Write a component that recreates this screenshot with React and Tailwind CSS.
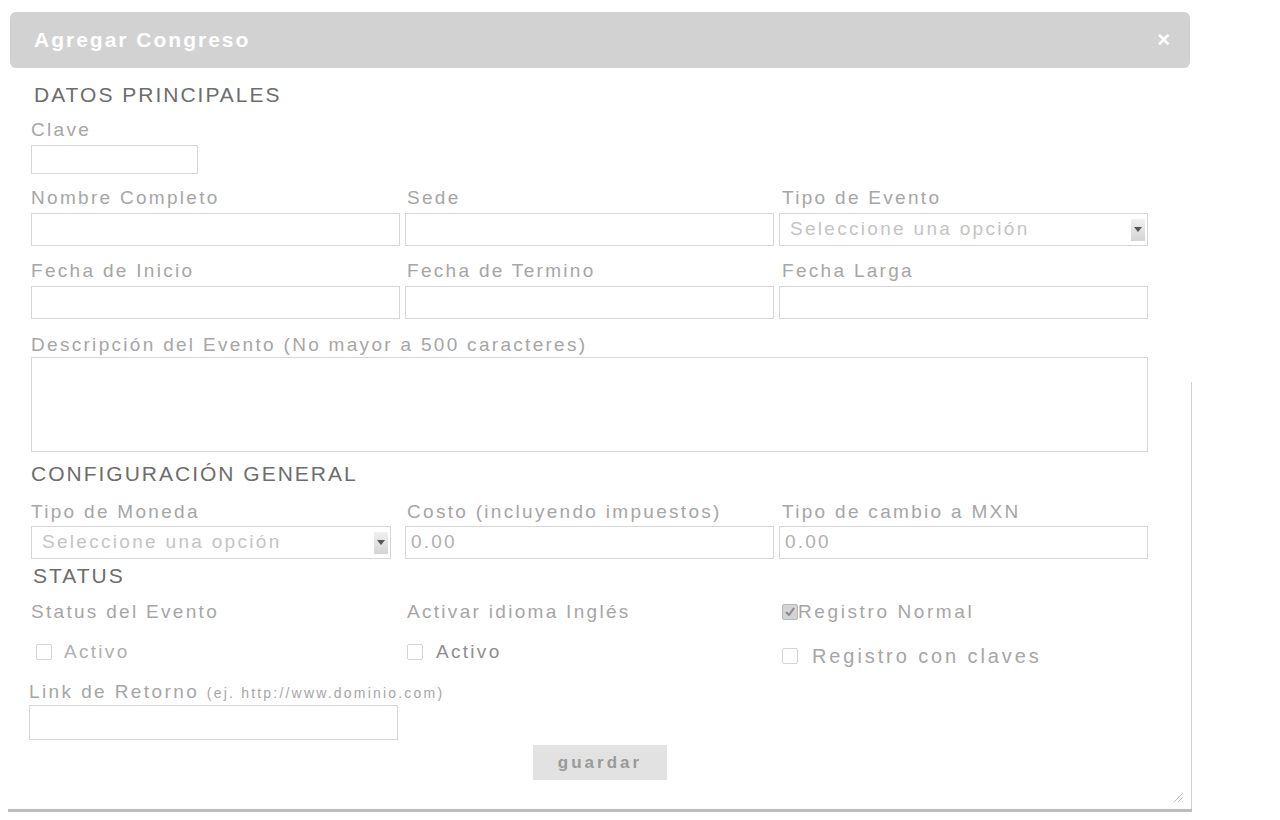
import React from "react";

const font = { fontFamily: '"Liberation Sans", Arial, sans-serif' };

function Label({ children, className = "" }) {
  return (
    <div className={`h-[20px] leading-[20px] text-[19px] tracking-[2.3px] text-[#a6a6a6] whitespace-nowrap ${className}`}>
      {children}
    </div>
  );
}

function Input({ className = "", value = "" }) {
  return (
    <div
      className={`border border-[#d6d6d6] bg-white text-[19px] tracking-[2.2px] text-[#b0b0b0] pl-[5px] flex items-center ${className}`}
    >
      {value}
    </div>
  );
}

function Select({ className = "" }) {
  return (
    <div className={`border border-[#d6d6d6] bg-white flex items-center justify-between ${className}`}>
      <span className="pl-[10px] text-[19px] tracking-[2.3px] text-[#c4c4c4] whitespace-nowrap">Seleccione una opción</span>
      <span className="w-[14px] h-[22px] mr-[2px] bg-gradient-to-b from-[#f0f0f0] to-[#d4d4d4] flex items-center justify-center">
        <svg width="8" height="5" viewBox="0 0 8 5">
          <path d="M0 0 L8 0 L4 5 Z" fill="#555" />
        </svg>
      </span>
    </div>
  );
}

function Heading({ children, className = "" }) {
  return (
    <div className={`h-[24px] leading-[24px] text-[21px] text-[#6d6d6d] tracking-[2px] whitespace-nowrap ${className}`}>
      {children}
    </div>
  );
}

function Check({ checked = false }) {
  return (
    <span
      className={`inline-flex shrink-0 w-[16px] h-[16px] border rounded-[2px] items-center justify-center ${
        checked ? "border-[#b8b8b8] bg-[#d4d4d4]" : "border-[#d4d4d4] bg-white"
      }`}
    >
      {checked && (
        <svg width="12" height="12" viewBox="0 0 12 12">
          <path d="M2 6 L5 9 L10 2" stroke="#8a8a8a" strokeWidth="2" fill="none" />
        </svg>
      )}
    </span>
  );
}

export default function App() {
  return (
    <div className="w-[1280px] h-[820px] bg-white" style={font}>
      <div className="pt-[8px] pl-[8px]">
        <div className="relative w-[1184px] h-[800px] bg-white border-b-[3px] border-b-[#bdbdbd]">
          <div className="absolute right-0 top-[370px] bottom-0 w-px bg-[#d0d0d0]" />
          {/* title bar */}
          <div className="mx-[2px] mt-[4px] h-[56px] rounded-[6px] bg-[#d2d2d2] flex items-center justify-between pl-[24px] pr-[20px]">
            <span className="text-white font-bold text-[21px] tracking-[2px]">Agregar Congreso</span>
            <span className="text-white font-bold text-[22px] leading-none">×</span>
          </div>

          <div className="pl-[23px]">
            <Heading className="mt-[15px] ml-[3px]">DATOS PRINCIPALES</Heading>
            <Label className="mt-[13px]">Clave</Label>
            <Input className="mt-[5px] w-[167px] h-[29px]" />

            <div className="mt-[14px] grid grid-cols-[369px_369px_369px] gap-x-[5px]">
              <Label>Nombre Completo</Label>
              <Label className="pl-[2px]">Sede</Label>
              <Label className="pl-[3px]">Tipo de Evento</Label>
              <Input className="mt-[5px] h-[33px]" />
              <Input className="mt-[5px] h-[33px]" />
              <Select className="mt-[5px] h-[33px]" />
            </div>

            <div className="mt-[15px] grid grid-cols-[369px_369px_369px] gap-x-[5px]">
              <Label>Fecha de Inicio</Label>
              <Label className="pl-[2px]">Fecha de Termino</Label>
              <Label className="pl-[3px]">Fecha Larga</Label>
              <Input className="mt-[5px] h-[33px]" />
              <Input className="mt-[5px] h-[33px]" />
              <Input className="mt-[5px] h-[33px]" />
            </div>

            <Label className="mt-[16px]">Descripción del Evento (No mayor a 500 caracteres)</Label>
            <Input className="mt-[2px] w-[1117px] h-[95px]" />

            <Heading className="mt-[10px]">CONFIGURACIÓN GENERAL</Heading>
            <div className="mt-[16px] grid grid-cols-[369px_369px_369px] gap-x-[5px]">
              <Label>Tipo de Moneda</Label>
              <Label className="pl-[2px]">Costo (incluyendo impuestos)</Label>
              <Label className="pl-[3px]">Tipo de cambio a MXN</Label>
              <div className="mt-[4px] h-[33px] flex">
                <Select className="h-[33px] w-[360px]" />
              </div>
              <Input className="mt-[4px] h-[33px]" value="0.00" />
              <Input className="mt-[4px] h-[33px]" value="0.00" />
            </div>

            <Heading className="mt-[5px] ml-[2px]">STATUS</Heading>
            <div className="mt-[14px] grid grid-cols-[369px_369px_369px] gap-x-[5px]">
              <Label>Status del Evento</Label>
              <Label className="pl-[2px]">Activar idioma Inglés</Label>
              <div className="pl-[3px] flex items-center h-[20px] text-[19px] tracking-[2.6px] text-[#a6a6a6] whitespace-nowrap">
                <Check checked />
                <span>Registro Normal</span>
              </div>
              <div className="mt-[20px] pl-[5px] flex items-center h-[20px] text-[19px] tracking-[2.3px] text-[#b0b0b0]">
                <Check />
                <span className="ml-[12px]">Activo</span>
              </div>
              <div className="mt-[20px] pl-[2px] flex items-center h-[20px] text-[19px] tracking-[2.3px] text-[#8e8e8e]">
                <Check />
                <span className="ml-[13px]">Activo</span>
              </div>
              <div className="mt-[24px] pl-[3px] flex items-center h-[20px] text-[20px] tracking-[2.9px] text-[#a6a6a6] whitespace-nowrap">
                <Check />
                <span className="ml-[14px]">Registro con claves</span>
              </div>
            </div>

            <div className="mt-[16px] h-[20px] leading-[20px] -ml-[2px] whitespace-nowrap text-[#a6a6a6]">
              <span className="text-[19px] tracking-[2.4px]">Link de Retorno </span>
              <span className="text-[14px] tracking-[2.2px]">(ej. http://www.dominio.com)</span>
            </div>
            <Input className="mt-[3px] -ml-[2px] w-[369px] h-[35px]" />
          </div>

          <div className="mt-[5px] flex justify-center">
            <div className="w-[134px] h-[35px] bg-[#e2e2e2] flex items-center justify-center text-[17px] font-bold text-[#9a9a9a] tracking-[3px]">
              guardar
            </div>
          </div>

          {/* resize grip */}
          <svg className="absolute right-[8px] bottom-[6px]" width="12" height="12" viewBox="0 0 12 12">
            <path d="M11 2 L2 11 M11 6 L6 11" stroke="#bbb" strokeWidth="1" />
          </svg>
        </div>
      </div>
    </div>
  );
}
